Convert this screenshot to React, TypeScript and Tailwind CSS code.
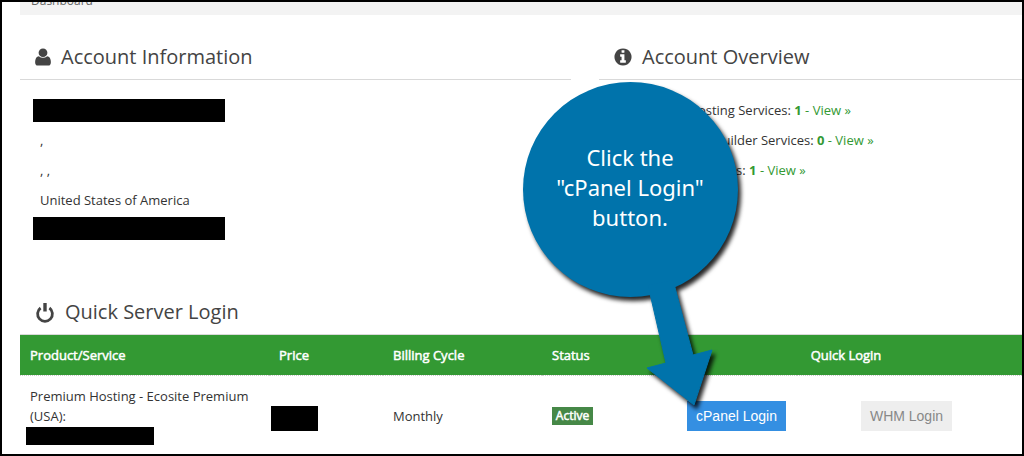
import type { ReactNode } from "react";

function UserIcon() {
  return (
    <svg viewBox="0 0 1792 1792" className="size-5 shrink-0" fill="currentColor" aria-hidden="true">
      <path d="M1600 1399q0 109-62.500 187t-150.500 78h-982q-88 0-150.500-78t-62.500-187q0-85 8.500-160.500t31.500-152 58.500-131 94-89 134.500-34.500q175 138 377 138t377-138q76 0 134.500 34.500t94 89 58.500 131 31.500 152 8.500 160.500zM1290 512q0 159-112.500 271.500t-281.500 112.500-281.500-112.500-112.500-271.500 112.500-271.500 281.500-112.500 281.500 112.500 112.500 271.500z" />
    </svg>
  );
}

function InfoIcon() {
  return (
    <svg viewBox="0 0 1792 1792" className="h-5 w-[22px] shrink-0" fill="currentColor" aria-hidden="true">
      <path d="M1152 1376v-160q0-14-9-23t-23-9h-96v-512q0-14-9-23t-23-9h-320q-14 0-23 9t-9 23v160q0 14 9 23t23 9h96v320h-96q-14 0-23 9t-9 23v160q0 14 9 23t23 9h448q14 0 23-9t9-23zm-128-896v-160q0-14-9-23t-23-9h-192q-14 0-23 9t-9 23v160q0 14 9 23t23 9h192q14 0 23-9t9-23zm640 416q0 209-103 385.500t-279.500 279.500-385.500 103-385.500-103-279.500-279.500-103-385.500 103-385.500 279.500-279.500 385.500-103 385.500 103 279.500 279.500 103 385.500z" />
    </svg>
  );
}

function PowerIcon() {
  return (
    <svg viewBox="0 0 20 20" className="h-5 w-6 shrink-0 overflow-visible" fill="none" stroke="currentColor" aria-hidden="true">
      <path d="M5.600 6A7.400 7.400 0 1 0 14.400 6" strokeWidth="2.800" />
      <path d="M10 1V9.500" strokeWidth="3.400" />
    </svg>
  );
}

function SectionHeading({ icon, children }: { icon: ReactNode; children: ReactNode }) {
  return (
    <h2 className="flex items-center gap-2 border-b border-[#d9d9d9] px-[13px] pt-2 pb-2 text-[20px] leading-7 text-[#444444]">
      {icon}
      {children}
    </h2>
  );
}

function Redacted({ className }: { className: string }) {
  return <span className={`block bg-black ${className}`} />;
}

const services = [
  { label: "Number of Hosting Services", count: 1 },
  { label: "Number of Site Builder Services", count: 0 },
  { label: "Number of Domains", count: 1 },
];

function Callout() {
  return (
    <div className="pointer-events-none absolute top-[78px] left-[518px] h-[340px] w-[230px]">
      <svg
        viewBox="0 0 230 340"
        className="absolute inset-0 size-full overflow-visible drop-shadow-[3px_4px_2px_rgba(0,0,0,0.85)]"
        fill="#0073ab"
        aria-hidden="true"
      >
        <circle cx="110.500" cy="109.500" r="107.500" />
        <path
          d="M128 205L146 283L127 288L174 325L192 270L173 275L153 200Z"
          stroke="#0073ab"
          strokeLinejoin="round"
        />
      </svg>
      <p className="relative w-[220px] pt-[62px] text-center font-['Noto_Sans',sans-serif] text-[22px] leading-[30px] text-white">
        Click the
        <br />
        "cPanel Login"
        <br />
        button.
      </p>
    </div>
  );
}

export default function App() {
  return (
    <div className="relative overflow-hidden border-2 border-black bg-white pl-[18px] font-['Open_Sans',sans-serif] text-[13px] leading-5 text-[#333333]">
      <nav className="flex h-[13px] items-end overflow-hidden bg-[#f3f3f3] px-[11px] text-[#666666]" aria-label="Breadcrumb">
        <span className="pb-1 text-[12px]">Dashboard</span>
      </nav>

      <div className="grid grid-cols-[551fr_423fr] gap-7 pt-5">
        <section>
          <SectionHeading icon={<UserIcon />}>Account Information</SectionHeading>
          <div className="px-5 pt-[15px] leading-[30px]">
            <div className="-ml-[7px] h-[30px] pt-1">
              <Redacted className="h-[23px] w-48" />
            </div>
            <p>,</p>
            <p>, ,</p>
            <p>United States of America</p>
            <div className="-ml-[7px] h-[30px] pt-0.5">
              <Redacted className="h-[23px] w-48" />
            </div>
          </div>
        </section>

        <section>
          <SectionHeading icon={<InfoIcon />}>Account Overview</SectionHeading>
          <ul className="px-5 pt-[15px] leading-[30px]">
            {services.map(({ label, count }) => (
              <li key={label}>
                {label}:{" "}
                <a href="#services" className="text-[#339933]">
                  <b>{count}</b> - View »
                </a>
              </li>
            ))}
          </ul>
        </section>
      </div>

      <section id="services" className="pt-[45px]">
        <SectionHeading icon={<PowerIcon />}>Quick Server Login</SectionHeading>
        <table className="w-full table-fixed text-left">
          <colgroup>
            <col className="w-[249px]" />
            <col className="w-[114px]" />
            <col className="w-[159px]" />
            <col className="w-[134px]" />
            <col className="w-[121px]" />
            <col />
          </colgroup>
          <thead className="[-webkit-text-stroke:0.5px_white]">
            <tr className="h-10 border-b border-dotted border-[#cccccc] bg-[#339933] text-white">
              <th className="px-2.5 font-normal">Product/Service</th>
              <th className="px-2.5 font-normal">Price</th>
              <th className="px-2.5 font-normal">Billing Cycle</th>
              <th className="px-2.5 font-normal">Status</th>
              <th colSpan={2} className="pr-4 pl-2.5 text-center font-normal">
                Quick Login
              </th>
            </tr>
          </thead>
          <tbody>
            <tr>
              <td className="px-2.5 pt-2.5 pb-2">
                Premium Hosting - Ecosite Premium (USA):
                <Redacted className="my-px -ml-1 h-[18px] w-32" />
              </td>
              <td className="px-2.5 pt-2">
                <Redacted className="-ml-2 h-[25px] w-[47px]" />
              </td>
              <td className="px-2.5 pt-0.5">Monthly</td>
              <td className="px-2.5 pt-0.5">
                <span className="block w-[41px] bg-[#468847] text-center text-[12px] leading-[18px] text-white [-webkit-text-stroke:0.5px_white]">
                  Active
                </span>
              </td>
              <td className="pt-0.5">
                <button
                  type="button"
                  className="mx-auto block h-[30px] bg-[#348fe2] px-[9px] font-['Liberation_Sans',sans-serif] text-[14px] text-white"
                >
                  cPanel Login
                </button>
              </td>
              <td className="pt-0.5 pr-1.5">
                <button
                  type="button"
                  className="mx-auto block h-[30px] bg-[#eeeeee] px-[9px] font-['Liberation_Sans',sans-serif] text-[14px] text-[#888888]"
                >
                  WHM Login
                </button>
              </td>
            </tr>
          </tbody>
        </table>
      </section>

      <Callout />
    </div>
  );
}
